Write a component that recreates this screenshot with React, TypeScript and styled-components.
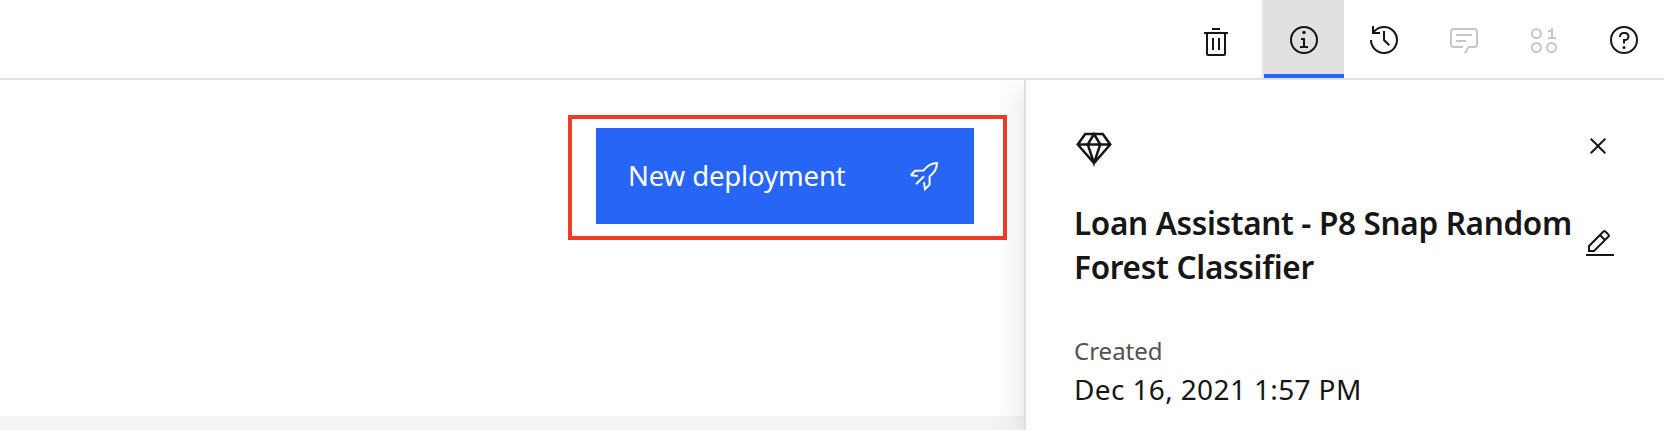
import React from "react";
import styled, { createGlobalStyle } from "styled-components";

const GlobalStyle = createGlobalStyle`
  * { box-sizing: border-box; }
  body { margin: 0; background: #fff; color: #161616; font-family: "Noto Sans", "Liberation Sans", sans-serif; overflow: hidden; }
  h2, p { margin: 0; }
  button { font: inherit; color: inherit; border: 0; padding: 0; background: none; }
`;

const Page = styled.div`
  display: flex;
  flex-direction: column;
  height: 430px;
`;

const Toolbar = styled.header`
  display: flex;
  justify-content: flex-end;
  height: 80px;
  flex: none;
  border-bottom: 2px solid #e0e0e0;
`;

const ToolButton = styled.button<{ $active?: boolean; $muted?: boolean; $drop?: number }>`
  display: flex;
  justify-content: center;
  align-items: flex-start;
  width: ${(p) => (p.$active ? 82 : 80)}px;
  padding-top: ${(p) => 24 + (p.$drop ?? 0)}px;
  color: ${(p) => (p.$muted ? "#c6c6c6" : "#161616")};
  ${(p) =>
    p.$active &&
    `border-left: 2px solid #e5e5e5;
     background: linear-gradient(to top, #2765f6 4px, #e0e0e0 4px);
     background-clip: padding-box;`}
`;

const TrashSlot = styled(ToolButton)`
  width: 92px;
`;

const Body = styled.div`
  display: flex;
  flex: 1;
  min-height: 0;
`;

const Main = styled.main`
  display: flex;
  flex-direction: column;
  justify-content: space-between;
  flex: 1;
`;

const Highlight = styled.div`
  align-self: flex-end;
  margin: 35px 17px 0 0;
  padding: 9px 29px 12px 24px;
  border: 4px solid #ed3e25;
`;

const DeployButton = styled.button`
  display: flex;
  justify-content: space-between;
  align-items: center;
  width: 378px;
  height: 96px;
  padding: 0 34px 0 32px;
  background: #2765f6;
  color: #fff;
`;

const Footer = styled.div`
  height: 14px;
  background: #f4f4f4;
`;

const Panel = styled.aside`
  width: 640px;
  padding: 48px 46px 0 48px;
  border-left: 2px solid #dde1e6;
  background: #fff;
  box-shadow: 0 8px 32px rgba(0, 0, 0, 0.13);
  clip-path: inset(0 0 0 -60px);
`;

const PanelTop = styled.div`
  display: flex;
  justify-content: space-between;
  height: 72px;
  padding: 2px 4px 0 0;
`;

const TitleRow = styled.div`
  display: flex;
  justify-content: space-between;
  height: 88px;
`;

const Title = styled.h2`
  padding-top: 1px;
  font-size: 31.5px;
  line-height: 44px;
  font-weight: 600;
  white-space: nowrap;
`;

const Line = styled.span<{ $spacing: number }>`
  display: block;
  letter-spacing: ${(p) => p.$spacing}px;
`;

const EditButton = styled.button`
  display: flex;
  padding-top: 28px;
  margin-right: 2px;
`;

const Text = styled.span<{ $size: number; $spacing: number; $color?: string }>`
  display: block;
  font-size: ${(p) => p.$size}px;
  line-height: 38px;
  letter-spacing: ${(p) => p.$spacing}px;
  color: ${(p) => p.$color ?? "inherit"};
  white-space: nowrap;
`;

const Details = styled.section`
  padding-top: 44px;
`;

const Glyph = styled.svg`
  display: block;
  flex: none;
  fill: currentColor;
`;

const Icon = ({ children, size = 32 }: { children: React.ReactNode; size?: number }) => (
  <Glyph width={size} height={size} viewBox="0 0 32 32" aria-hidden="true">
    {children}
  </Glyph>
);

const RING = "M16,30A14,14,0,1,1,30,16,14,14,0,0,1,16,30ZM16,4A12,12,0,1,0,28,16,12,12,0,0,0,16,4Z";

export default function App() {
  return (
    <Page>
      <GlobalStyle />
      <Toolbar>
        <TrashSlot $drop={2} aria-label="Delete">
          <Icon><path d="M12 12h2v12h-2zM18 12h2v12h-2zM12 2h8v2h-8z" /><path d="M4 6V8H6V28a2 2 0 0 0 2 2H24a2 2 0 0 0 2-2V8h2V6zM8 28V8H24V28z" /></Icon>
        </TrashSlot>
        <ToolButton $active aria-label="Information">
          <Icon><path d="M17 22V14H13v2h2v6H12v2h8V22z" /><circle cx="16" cy="8.5" r="1.7" /><path d={RING} /></Icon>
        </ToolButton>
        <ToolButton aria-label="History">
          <Icon><path d="M20.59 22 15 16.41V7h2v8.58l5 5.01z" /><path d="M16,2A13.94,13.94,0,0,0,6,6.23V2H4v8h8V8H7.08A12,12,0,1,1,4,16H2A14,14,0,1,0,16,2Z" /></Icon>
        </ToolButton>
        <ToolButton $muted aria-label="Comments">
          <Icon><path d="M17.74 30 16 29l4-7h6a2 2 0 0 0 2-2V8a2 2 0 0 0-2-2H6a2 2 0 0 0-2 2v12a2 2 0 0 0 2 2h9v2H6a4 4 0 0 1-4-4V8a4 4 0 0 1 4-4h20a4 4 0 0 1 4 4v12a4 4 0 0 1-4 4h-4.84z" /><path d="M8 10h16v2H8zM8 16h10v2H8z" /></Icon>
        </ToolButton>
        <ToolButton $muted aria-label="Data">
          <Icon>
            <g fill="none" stroke="currentColor" strokeWidth="2"><circle cx="8.4" cy="9.6" r="4.5" /><circle cx="8.4" cy="23.5" r="4.5" /><circle cx="23.5" cy="23.5" r="4.5" /></g>
            <path d="M25 13V4h-2v2h-3v2h3v5h-3v2h8v-2z" />
          </Icon>
        </ToolButton>
        <ToolButton aria-label="Help">
          <Icon><path d={RING} /><circle cx="16" cy="23.5" r="1.5" /><path d="M17,8H15.5A4.49,4.49,0,0,0,11,12.5V13h2v-.5A2.5,2.5,0,0,1,15.5,10H17a2.5,2.5,0,0,1,0,5H15v4.5h2V17a4.5,4.5,0,0,0,0-9Z" /></Icon>
        </ToolButton>
      </Toolbar>
      <Body>
        <Main>
          <Highlight>
            <DeployButton>
              <Text $size={27.5} $spacing={-0.12}>New deployment</Text>
              <Icon>
                <path d="M2.8 15.2 7 10.7l8.5-.3C19 6 22.5 3 29 3c0 6.5-3 10-7.4 13.500v8.200L17 29.200l-1-7M2.800 15.200l7 .8M16 16.200 8 24.200" fill="none" stroke="currentColor" strokeWidth="2" />
              </Icon>
            </DeployButton>
          </Highlight>
          <Footer />
        </Main>
        <Panel>
          <PanelTop>
            <Icon size={40}>
              <path d="M9 3.2H23L29 11.6 16 26.500 3 11.600ZM3 11.600H29M16 3.200 11 11.600 16 26.500 21 11.600Z" fill="none" stroke="currentColor" strokeWidth="2" />
            </Icon>
            <Icon><path d="M24 9.400 22.600 8 16 14.600 9.400 8 8 9.400 14.600 16 8 22.600 9.400 24 16 17.400 22.600 24 24 22.600 17.400 16z" /></Icon>
          </PanelTop>
          <TitleRow>
            <Title>
              <Line $spacing={-0.33}>Loan Assistant - P8 Snap Random</Line>
              <Line $spacing={-0.27}>Forest Classifier</Line>
            </Title>
            <EditButton aria-label="Edit">
              <Icon><path d="M2 26h28v2H2zM25.400 9c.8-.8.8-2 0-2.800L21.800 2.600c-.8-.8-2-.8-2.800 0l-15 15V24h6.400zM20.400 4 24 7.600l-3 3L17.400 7zM6 22v-3.600l10-10 3.600 3.600-10 10z" /></Icon>
            </EditButton>
          </TitleRow>
          <Details>
            <Text $size={24} $spacing={0} $color="#525252">Created</Text>
            <Text $size={28} $spacing={0.37}>Dec 16, 2021 1:57 PM</Text>
          </Details>
        </Panel>
      </Body>
    </Page>
  );
}
